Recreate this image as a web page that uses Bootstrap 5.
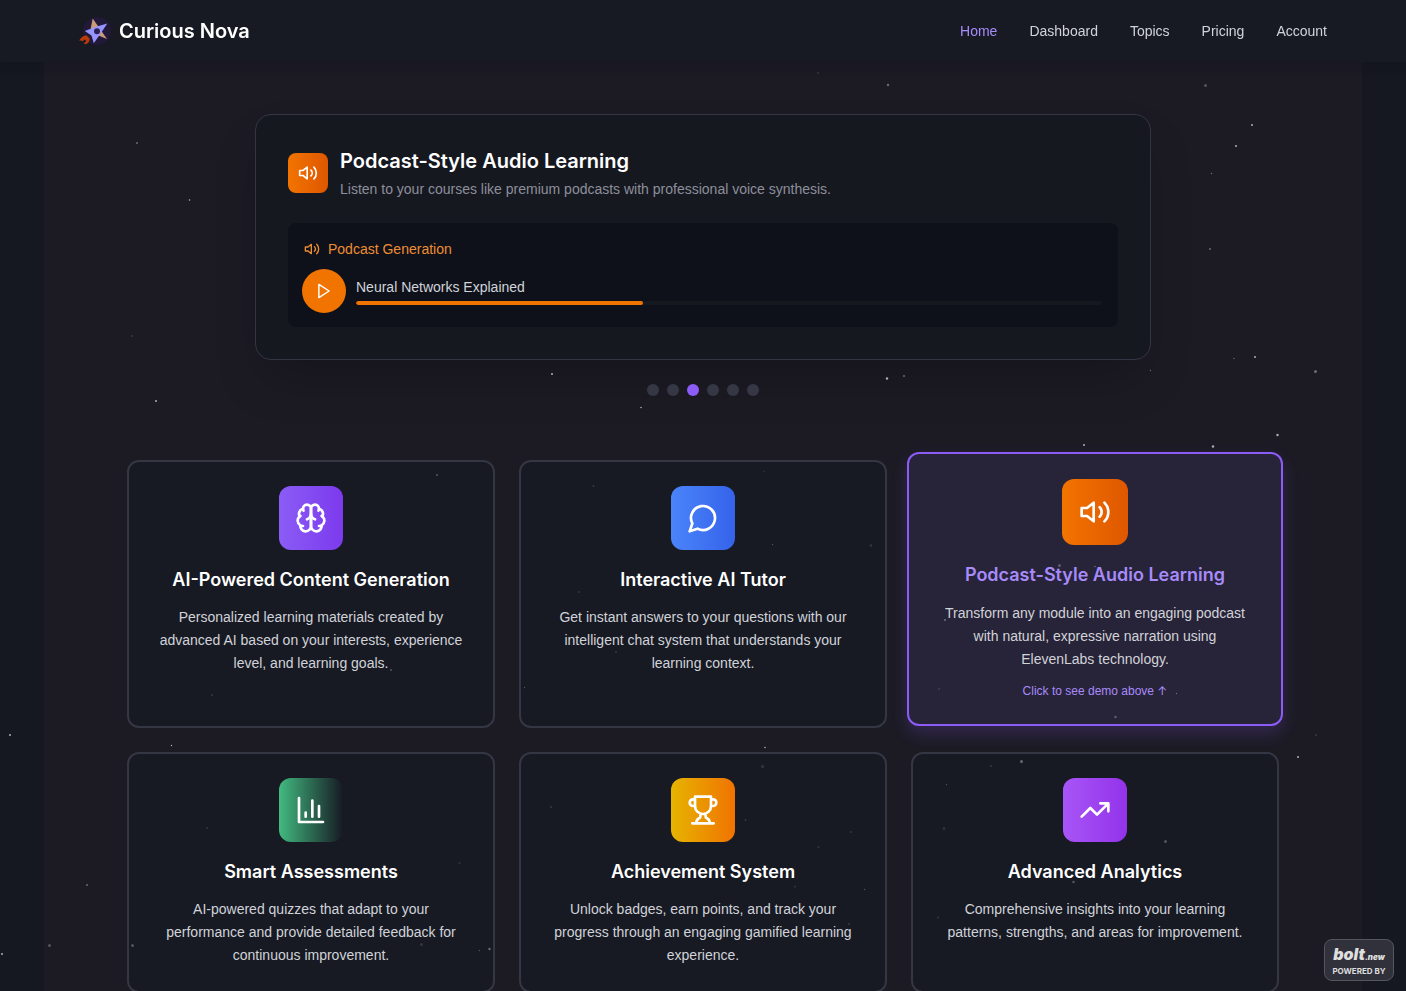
<!DOCTYPE html>
<html lang="en" data-bs-theme="dark">
<head>
<meta charset="utf-8">
<meta name="viewport" content="width=device-width, initial-scale=1">
<title>Curious Nova</title>
<link href="https://cdn.jsdelivr.net/npm/bootstrap@5.3.0/dist/css/bootstrap.min.css" rel="stylesheet">
<style>
  body { background: #151820; color: #d1d3d9; font: 14px/20px "Liberation Sans", Arial, sans-serif; }
  .display-face { font-family: Inter, "Noto Sans", sans-serif; font-weight: 600; line-height: 28px; color: #fff; }
  .title-lg { font-size: 20px; }
  .title-md { font-size: 18px; }

  .site-header { background: #171a23; box-shadow: 0 4px 10px rgba(15, 16, 26, .3); }
  .site-header .navbar { max-width: 1280px; min-height: 62px; --bs-navbar-padding-y: 0; }
  .site-header .navbar .nav-link { padding: 0; color: #d1d3d9; }
  .site-header .navbar .nav-link.active { color: #a78bfa; }
  .menu-links { gap: 32px; }

  .stage { background: #1c1b24; margin: 0 44px; padding-top: 52px; }
  .demo-wrap { max-width: 896px; margin-bottom: 64px; }
  .demo-panel { background: #161820; border: 1px solid #343542; border-radius: 16px; padding: 32px; box-shadow: 0 25px 50px -12px rgba(0, 0, 0, .25); }
  .icon-tile { display: grid; place-items: center; color: #fff; width: 64px; height: 64px; border-radius: 12px; }
  .icon-tile.tile-sm { width: 40px; height: 40px; border-radius: 8px; }
  .icon-tile.tile-lg { width: 66px; height: 66px; }
  .tone-violet { background: linear-gradient(90deg, #8b5cf6, #7c3aed); }
  .tone-blue { background: linear-gradient(90deg, #4a84fb, #3563ea); }
  .tone-orange { background: linear-gradient(90deg, #f27400, #df5700); }
  .tone-green { background: linear-gradient(90deg, #41ba80, rgba(65, 186, 128, 0)); }
  .tone-gold { background: linear-gradient(90deg, #e6b400, #f07300); }
  .tone-purple { background: linear-gradient(90deg, #a855f7, #9333ea); }
  .muted-copy { color: #8d8f9b; }

  .player { background: #0e1119; border-radius: 8px; padding: 16px; margin-top: 24px; }
  .player-label { color: #ee8d34; gap: 8px; margin-bottom: 12px; }
  .player-row { gap: 12px; }
  .play-button { width: 40px; height: 40px; border: 0; border-radius: 50%; background: #f27400; color: #fff; transform: scale(1.1); display: grid; place-items: center; padding: 0; }
  .player .progress { height: 4px; margin-top: 4px; border-radius: 2px; --bs-progress-bg: #161820; --bs-progress-bar-bg: #f27400; }
  .player .progress-bar { border-radius: 2px; }

  .slide-dots { gap: 8px; margin-top: 24px; }
  .slide-dots button { width: 12px; height: 12px; border: 0; padding: 0; border-radius: 50%; background: #363745; }
  .slide-dots button.active { background: #8b5cf6; }

  .feature-wrap { max-width: 1152px; }
  .feature { background: #171a23; border: 2px solid #353644; border-radius: 12px; padding: 24px; text-align: center; flex: 1 1 0; min-width: 0; }
  .feature p { line-height: 23px; margin: 12px 0 0; }
  .feature .icon-tile { margin: 0 auto 16px; }
  .feature-selected { background: #272338; border-color: #8b5cf6; padding: 25px 28px; margin: -8px -4px 2px; box-shadow: 0 8px 16px rgba(139, 92, 246, .2); }
  .feature-selected p { margin-top: 13px; }
  .feature-selected .display-face { color: #a78bfa; }
  .feature-selected a { display: block; margin-top: 12px; font-size: 12px; line-height: 16px; color: #a78bfa; text-decoration: none; }
  .arrow-glyph { font-family: Inter, sans-serif; }

  .starfield { position: fixed; inset: 0; width: 100%; height: 100%; pointer-events: none; z-index: 5; }
  .bolt-badge { position: fixed; right: 12px; bottom: 10px; z-index: 1040; width: 70px; height: 42px; background: #30313b; border: 1px solid #55565f; border-radius: 8px; color: #dededf; text-decoration: none; font-family: Inter, sans-serif; font-weight: 800; text-align: center; }
  .bolt-name { font-size: 16px; line-height: 18px; font-style: italic; font-weight: 900; }
  .bolt-suffix { font-size: 8px; }
  .bolt-by { font-size: 8px; line-height: 10px; font-weight: 700; }
</style>
</head>
<body>
<svg class="d-none" aria-hidden="true">
  <symbol id="volume" viewBox="0 0 24 24"><path d="M11 5 6 9H2v6h4l5 4z"/><path d="M15.54 8.46a5 5 0 0 1 0 7.07"/><path d="M19.07 4.93a10 10 0 0 1 0 14.14"/></symbol>
</svg>

<header class="site-header sticky-top">
  <nav class="navbar navbar-expand mx-auto px-3" aria-label="Main">
    <a class="navbar-brand d-flex align-items-center gap-2 p-0 m-0 display-face title-lg" href="#">
      <svg width="32" height="32" viewBox="0 0 32 32" aria-hidden="true">
        <circle cx="18" cy="16" r="14" fill="#221838"/>
        <path d="M13.7 3.6 28 24 11 17z" fill="#c99b7b"/>
        <path d="M28.3 8.600 22.300 17.500 14.800 28.200 12.500 20.500 5.800 15.900 17 11.700z" fill="#9694ff"/>
        <circle cx="18" cy="16.2" r="3" fill="#2b2050"/>
        <path d="M0 25.7C2 22.5 4.600 20 7.500 20.600L10.600 23.400C10.800 26.700 9 28.700 5.600 29.200L4.800 28.200C6.600 27.400 7.500 26 6.600 24.900C5.300 24.400 4.500 25 4 26.500C2.600 25.300 1.200 25.200 0 25.700Z" fill="#b93a08"/>
      </svg>
      <span>Curious Nova</span>
    </a>
    <ul class="navbar-nav ms-auto menu-links">
      <li class="nav-item"><a class="nav-link active" aria-current="page" href="#">Home</a></li>
      <li class="nav-item"><a class="nav-link" href="#">Dashboard</a></li>
      <li class="nav-item"><a class="nav-link" href="#">Topics</a></li>
      <li class="nav-item"><a class="nav-link" href="#">Pricing</a></li>
      <li class="nav-item"><a class="nav-link" href="#">Account</a></li>
    </ul>
  </nav>
</header>

<main class="stage">
  <section class="demo-wrap mx-auto" id="demo">
    <div class="demo-panel">
      <div class="d-flex align-items-center">
        <span class="icon-tile tile-sm tone-orange flex-shrink-0"><svg width="20" height="20" fill="none" stroke="currentColor" stroke-width="2" stroke-linecap="round" stroke-linejoin="round" aria-hidden="true"><use href="#volume"/></svg></span>
        <div class="ms-2 ps-1">
          <h2 class="display-face title-lg mb-1">Podcast-Style Audio Learning</h2>
          <p class="muted-copy mb-0">Listen to your courses like premium podcasts with professional voice synthesis.</p>
        </div>
      </div>
      <div class="player">
        <div class="player-label d-flex align-items-center">
          <svg width="16" height="16" fill="none" stroke="currentColor" stroke-width="2" stroke-linecap="round" stroke-linejoin="round" aria-hidden="true"><use href="#volume"/></svg>
          <span>Podcast Generation</span>
        </div>
        <div class="player-row d-flex align-items-center">
          <button class="play-button flex-shrink-0" type="button" aria-label="Play">
            <svg width="16" height="16" viewBox="0 0 24 24" fill="none" stroke="currentColor" stroke-width="2" stroke-linecap="round" stroke-linejoin="round" aria-hidden="true"><path d="m5 3 14 9-14 9z"/></svg>
          </button>
          <div class="flex-grow-1">
            <div>Neural Networks Explained</div>
            <div class="progress" role="progressbar" aria-label="Playback" aria-valuenow="38" aria-valuemin="0" aria-valuemax="100"><div class="progress-bar" style="width:38.5%"></div></div>
          </div>
        </div>
      </div>
    </div>
    <div class="slide-dots d-flex justify-content-center">
      <button type="button" aria-label="Demo 1"></button>
      <button type="button" aria-label="Demo 2"></button>
      <button type="button" class="active" aria-label="Demo 3" aria-current="true"></button>
      <button type="button" aria-label="Demo 4"></button>
      <button type="button" aria-label="Demo 5"></button>
      <button type="button" aria-label="Demo 6"></button>
    </div>
  </section>

  <section class="feature-wrap mx-auto">
    <div class="row row-cols-1 row-cols-md-3 g-4">
      <div class="col d-flex">
        <article class="feature">
          <span class="icon-tile tone-violet"><svg width="32" height="32" viewBox="0 0 24 24" fill="none" stroke="currentColor" stroke-width="2" stroke-linecap="round" stroke-linejoin="round" aria-hidden="true"><path d="M12 5a3 3 0 1 0-5.997.125 4 4 0 0 0-2.526 5.77 4 4 0 0 0 .556 6.588A4 4 0 1 0 12 18Z"/><path d="M12 5a3 3 0 1 1 5.997.125 4 4 0 0 1 2.526 5.77 4 4 0 0 1-.556 6.588A4 4 0 1 1 12 18Z"/><path d="M15 13a4.500 4.500 0 0 1-3-4 4.500 4.500 0 0 1-3 4M17.599 6.500a3 3 0 0 0 .399-1.375M6.003 5.125A3 3 0 0 0 6.401 6.500M3.477 10.896a4 4 0 0 1 .585-.396M19.938 10.500a4 4 0 0 1 .585.396M6 18a4 4 0 0 1-1.967-.516M19.967 17.484A4 4 0 0 1 18 18"/></svg></span>
          <h3 class="display-face title-md m-0">AI-Powered Content Generation</h3>
          <p>Personalized learning materials created by advanced AI based on your interests, experience level, and learning goals.</p>
        </article>
      </div>
      <div class="col d-flex">
        <article class="feature">
          <span class="icon-tile tone-blue"><svg width="32" height="32" viewBox="0 0 24 24" fill="none" stroke="currentColor" stroke-width="2" stroke-linecap="round" stroke-linejoin="round" aria-hidden="true"><path d="M7.900 20A9 9 0 1 0 4 16.100L2 22Z"/></svg></span>
          <h3 class="display-face title-md m-0">Interactive AI Tutor</h3>
          <p>Get instant answers to your questions with our intelligent chat system that understands your learning context.</p>
        </article>
      </div>
      <div class="col d-flex">
        <article class="feature feature-selected">
          <span class="icon-tile tile-lg tone-orange"><svg width="32" height="32" fill="none" stroke="currentColor" stroke-width="2" stroke-linecap="round" stroke-linejoin="round" aria-hidden="true"><use href="#volume"/></svg></span>
          <h3 class="display-face title-md m-0">Podcast-Style Audio Learning</h3>
          <p>Transform any module into an engaging podcast with natural, expressive narration using ElevenLabs technology.</p>
          <a href="#demo">Click to see demo above <span class="arrow-glyph">↑</span></a>
        </article>
      </div>
      <div class="col d-flex">
        <article class="feature">
          <span class="icon-tile tone-green"><svg width="32" height="32" viewBox="0 0 24 24" fill="none" stroke="currentColor" stroke-width="2" stroke-linecap="round" stroke-linejoin="round" aria-hidden="true"><path d="M3 3v18h18M18 17V9M13 17V5M8 17v-3"/></svg></span>
          <h3 class="display-face title-md m-0">Smart Assessments</h3>
          <p>AI-powered quizzes that adapt to your performance and provide detailed feedback for continuous improvement.</p>
        </article>
      </div>
      <div class="col d-flex">
        <article class="feature">
          <span class="icon-tile tone-gold"><svg width="32" height="32" viewBox="0 0 24 24" fill="none" stroke="currentColor" stroke-width="2" stroke-linecap="round" stroke-linejoin="round" aria-hidden="true"><path d="M6 9H4.500a2.500 2.500 0 0 1 0-5H6M18 9h1.500a2.500 2.500 0 0 0 0-5H18M4 22h16M10 14.660V17c0 .55-.47.98-.97 1.210C7.850 18.750 7 20.240 7 22M14 14.660V17c0 .55.47.98.97 1.210C16.150 18.750 17 20.240 17 22M18 2H6v7a6 6 0 0 0 12 0V2Z"/></svg></span>
          <h3 class="display-face title-md m-0">Achievement System</h3>
          <p>Unlock badges, earn points, and track your progress through an engaging gamified learning experience.</p>
        </article>
      </div>
      <div class="col d-flex">
        <article class="feature">
          <span class="icon-tile tone-purple"><svg width="32" height="32" viewBox="0 0 24 24" fill="none" stroke="currentColor" stroke-width="2" stroke-linecap="round" stroke-linejoin="round" aria-hidden="true"><path d="m22 7-8.500 8.500-5-5L2 17M16 7h6v6"/></svg></span>
          <h3 class="display-face title-md m-0">Advanced Analytics</h3>
          <p>Comprehensive insights into your learning patterns, strengths, and areas for improvement.</p>
        </article>
      </div>
    </div>
  </section>
</main>

<svg class="starfield" viewBox="0 0 1406 991" preserveAspectRatio="xMidYMin slice" fill="#fff" aria-hidden="true">
  <g opacity=".65">
    <circle cx="189.500" cy="200" r=".8"/><circle cx="1252" cy="125" r="1"/><circle cx="1236" cy="146" r="1"/><circle cx="156" cy="401" r="1"/><circle cx="552" cy="374" r="1"/><circle cx="641" cy="407.500" r=".8"/><circle cx="1255" cy="357" r="1"/><circle cx="1277.500" cy="435" r="1.200"/><circle cx="1084" cy="445" r="1"/><circle cx="1213" cy="446.500" r="1.200"/><circle cx="887" cy="378.500" r="1.200"/><circle cx="10" cy="735" r="1"/><circle cx="2" cy="954" r="1"/><circle cx="765" cy="747.500" r=".8"/><circle cx="1298" cy="757" r="1"/><circle cx="171.500" cy="745.500" r=".7"/>
  </g>
  <g opacity=".35">
    <circle cx="888" cy="85" r="1.200"/><circle cx="1211.500" cy="173.500" r=".8"/><circle cx="1210" cy="249" r="1"/><circle cx="904" cy="376" r="1"/><circle cx="1150.500" cy="370.500" r=".7"/><circle cx="1315.500" cy="371.500" r="1.500"/><circle cx="945" cy="620" r="1"/><circle cx="1176.500" cy="693.500" r=".7"/><circle cx="1095" cy="566.500" r=".8"/><circle cx="1021.500" cy="761.500" r="1.500"/><circle cx="489.500" cy="949" r="1.200"/><circle cx="87" cy="885" r="1"/><circle cx="1234" cy="358.500" r=".7"/><circle cx="137" cy="143" r="1"/>
  </g>
  <g opacity=".25">
    <circle cx="1205.500" cy="85.500" r="1.500"/><circle cx="437" cy="475" r="1"/><circle cx="391" cy="670" r="1"/><circle cx="772.500" cy="544.500" r=".7"/><circle cx="1059.500" cy="565.500" r="1.500"/><circle cx="1115.500" cy="717" r="1.300"/><circle cx="132.500" cy="945.500" r="1.500"/><circle cx="49.500" cy="945.500" r="1.500"/><circle cx="1165.500" cy="841.500" r="1.500"/><circle cx="1073.500" cy="882" r="1.300"/><circle cx="524.500" cy="687.500" r=".7"/><circle cx="946.500" cy="784.500" r=".7"/><circle cx="864.500" cy="889.500" r=".7"/><circle cx="479.500" cy="950.500" r=".7"/>
  </g>
  <g opacity=".13">
    <circle cx="818" cy="73" r="1"/><circle cx="132" cy="336" r="1"/><circle cx="212" cy="695" r="1"/><circle cx="593.500" cy="486" r="1"/><circle cx="764" cy="471.500" r=".8"/><circle cx="871" cy="545.500" r="1.300"/><circle cx="579" cy="592" r="1"/><circle cx="616" cy="652" r="1"/><circle cx="939" cy="689" r="1"/><circle cx="207" cy="828" r="1"/><circle cx="459.500" cy="863" r="1"/><circle cx="421.500" cy="944.500" r="1.500"/><circle cx="551" cy="807" r="1"/><circle cx="762.500" cy="766.500" r="1.500"/><circle cx="745.500" cy="820" r="1"/><circle cx="851" cy="832" r="1"/><circle cx="818.500" cy="847" r="1"/><circle cx="795" cy="886.500" r="1"/><circle cx="849" cy="924" r="1"/><circle cx="991" cy="766" r="1"/><circle cx="944" cy="828.500" r="1.200"/><circle cx="1316" cy="735" r="1"/><circle cx="938" cy="917.500" r="1"/>
  </g>
</svg>

<a class="bolt-badge d-flex flex-column justify-content-center" href="#" aria-label="Powered by bolt.new">
  <span class="bolt-name">bolt<span class="bolt-suffix">.new</span></span>
  <span class="bolt-by">POWERED BY</span>
</a>
<script src="https://cdn.jsdelivr.net/npm/bootstrap@5.3.0/dist/js/bootstrap.bundle.min.js"></script>
</body>
</html>
